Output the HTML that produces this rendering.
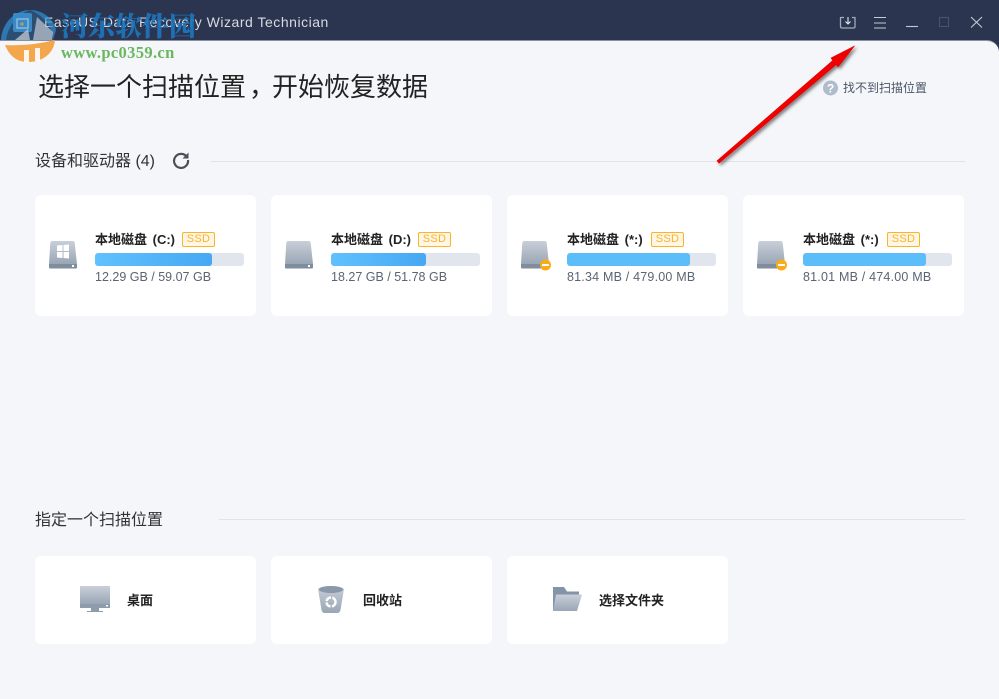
<!DOCTYPE html>
<html><head><meta charset="utf-8">
<style>
html,body{margin:0;padding:0}
body{width:999px;height:699px;position:relative;overflow:hidden;background:#2b354f;font-family:"Liberation Sans","Noto Sans CJK SC",sans-serif;color:#2a2a2a}
.main{position:absolute;left:0;top:40px;width:999px;height:659px;background:#f4f6fa;border-radius:0 12px 0 0;border-top:1px solid #8a90a0;box-sizing:border-box}
.abs{position:absolute;white-space:nowrap}
.card{position:absolute;background:#fff;border-radius:6px;width:221px}
.line{position:absolute;height:1px;background:#e0e3e9}
.bar{position:absolute;left:60px;top:58px;width:149px;height:13px;background:#e1e6ee;border-radius:3px;overflow:hidden}
.fill{height:13px;background:linear-gradient(90deg,#60c1fd,#46a8f3);border-radius:3px}
.name{position:absolute;left:60px;top:37px;font-size:13px;font-weight:bold;color:#222;white-space:nowrap;line-height:16px;word-spacing:2px}
.ssd{position:absolute;top:37px;width:31px;height:13px;border:1px solid #fbb328;background:#fff6e6;color:#fbb328;border-radius:2px;font-size:11px;letter-spacing:.3px;line-height:13px;text-align:center}
.size{position:absolute;left:60px;top:74px;font-size:12.5px;color:#5b6474;white-space:nowrap;line-height:16px}
.ic{position:absolute}
.loc{position:absolute;font-size:13px;font-weight:bold;color:#222;white-space:nowrap;line-height:16px;top:37px}
</style></head><body>
<div class="main"></div>

<svg class="abs" style="left:13px;top:13px" width="20" height="20"><rect x="0" y="0" width="19" height="19" rx="2" fill="#3f87bf"/><rect x="4" y="6" width="11" height="9" fill="none" stroke="#a9cbe3" stroke-width="1.500"/><path d="M9 9v4M7 11h4" stroke="#e0a040" stroke-width="1.500"/></svg>
<div class="abs" style="left:44px;top:14px;font-size:14px;line-height:17px;letter-spacing:.52px;color:#d8dbe2">EaseUS Data Recovery Wizard Technician</div>

<svg class="abs" style="left:0;top:0" width="60" height="64" viewBox="0 0 60 64">
<path d="M1 40C1 24 14 10 30 10c13 0 24 9 26 20l-3 10H1z" fill="#2f8fd0" opacity=".28"/>
<path d="M1 40C2 24 14 10 30 10c-12 4-22 16-24 30z" fill="#2f8fd0" opacity=".65"/>
<path d="M30 10c13 0 24 9 26 20l-3 10c0-12-8-24-23-30z" fill="#2f8fd0" opacity=".6"/>
<path d="M37 17 53 32l-1 8H33z" fill="#cfd3da" opacity=".65"/>
<path d="M15 40 28 29l2 11z" fill="#cfd3da" opacity=".7"/>
<path d="M5 45c16 1 34-1 50-5-1 13-12 22-27 22C16 62 9 55 5 45z" fill="#f3a64b"/>
<rect x="24" y="50" width="5" height="12" fill="#fff" opacity=".9"/><rect x="35" y="48" width="5" height="13" fill="#fff" opacity=".9"/>
</svg>
<div class="abs" style="left:61px;top:9px;font-family:'Noto Serif CJK SC',serif;font-weight:900;font-size:27px;line-height:32px;color:#1d74bc;opacity:.92">河东软件园</div>
<div class="abs" style="left:61px;top:44px;font-family:'Liberation Serif',serif;font-weight:bold;font-size:16.500px;line-height:18px;color:#6ab760;letter-spacing:.35px">www.pc0359.cn</div>

<!-- window icons -->
<svg class="abs" style="left:830px;top:5px" width="169" height="35" fill="none" stroke="#c6cbd6" stroke-width="1.100">
<path d="M10.500 12v9.500c0 1 .5 1.500 1.500 1.500h11.500c1 0 1.500-.5 1.500-1.500V12M10.500 12.500h3.500M22 12.500h3" stroke="#a4aab8" stroke-width="1.300"/>
<path d="M18 12v7M15.500 16.500l2.500 2.500 2.500-2.500" stroke="#e4e7ee"/>
<path d="M44 12.500h12M44 18h12M44 23h12"/>
<path d="M76 21.500h12"/>
<rect x="109.500" y="12.500" width="9" height="9" stroke="#48536b"/>
<path d="M141 12l11 10.500M152 12l-11 10.500"/>
</svg>

<div class="abs" style="left:38px;top:71px;font-size:26px;line-height:32px;color:#222">选择一个扫描位置<span style="position:relative;left:3px">，</span>开始恢复数据</div>
<svg class="abs" style="left:823px;top:80px" width="16" height="16"><circle cx="7.500" cy="8" r="7.500" fill="#b0bccb"/><text x="7.500" y="12.500" font-size="12" font-weight="bold" fill="#fff" text-anchor="middle" font-family="Liberation Sans">?</text></svg>
<div class="abs" style="left:843px;top:80px;font-size:12px;line-height:16px;color:#4c5566">找不到扫描位置</div>

<div class="abs" style="left:35px;top:152px;font-size:16px;line-height:20px;color:#333">设备和驱动器 (4)</div>
<svg class="abs" style="left:172px;top:151px" width="18" height="18" fill="none"><path d="M15 6.200A7 7 0 1 0 16 9" stroke="#4a4f58" stroke-width="2.200"/><path d="M16.500 1.500v6h-6z" fill="#4a4f58"/></svg>
<div class="line" style="left:211px;top:161px;width:754px"></div>

<div class="card" style="left:35px;top:195px;height:121px">
<svg class="ic" style="left:14px;top:45px" width="30" height="30"><defs><linearGradient id="g" x1="0" y1="0" x2="0" y2="1"><stop offset="0" stop-color="#c8cfd9"/><stop offset="1" stop-color="#9aa6b5"/></linearGradient></defs><path d="M3.500 1h20q2 0 2.200 2L28 24H0L1.300 3q.2-2 2.200-2z" fill="url(#g)"/><path d="M0 24h28v3.500q0 1-1 1H1q-1 0-1-1z" fill="#7f8d9d"/><rect x="23" y="25" width="2" height="2" fill="#fff"/><path d="M8 5.500l5.500-.5v6H8zM14.500 5l5.500-.5V11h-5.500zM8 12h5.500v6L8 17.500zM14.500 12H20v6.500l-5.500-.5z" fill="#fff"/></svg>
<div class="name">本地磁盘 (C:)</div><div class="ssd" style="left:147px">SSD</div>
<div class="bar"><div class="fill" style="width:117px"></div></div>
<div class="size">12.29 GB / 59.07 GB</div>
</div>

<div class="card" style="left:271px;top:195px;height:121px">
<svg class="ic" style="left:14px;top:45px" width="30" height="30"><path d="M3.500 1h20q2 0 2.200 2L28 24H0L1.300 3q.2-2 2.200-2z" fill="url(#g)"/><path d="M0 24h28v3.500q0 1-1 1H1q-1 0-1-1z" fill="#7f8d9d"/><rect x="23" y="25" width="2" height="2" fill="#fff"/></svg>
<div class="name">本地磁盘 (D:)</div><div class="ssd" style="left:147px">SSD</div>
<div class="bar"><div class="fill" style="width:95px"></div></div>
<div class="size">18.27 GB / 51.78 GB</div>
</div>

<div class="card" style="left:507px;top:195px;height:121px">
<svg class="ic" style="left:14px;top:45px" width="32" height="32"><path d="M3.500 1h20q2 0 2.200 2L28 24H0L1.300 3q.2-2 2.200-2z" fill="url(#g)"/><path d="M0 24h28v3.500q0 1-1 1H1q-1 0-1-1z" fill="#7f8d9d"/><circle cx="24.500" cy="25" r="5.500" fill="#fbab18"/><rect x="21" y="24" width="7" height="2" fill="#fff"/></svg>
<div class="name">本地磁盘 (*:)</div><div class="ssd" style="left:144px">SSD</div>
<div class="bar"><div class="fill" style="width:123px;background:#5cbdfb"></div></div>
<div class="size" style="letter-spacing:.2px">81.34 MB / 479.00 MB</div>
</div>

<div class="card" style="left:743px;top:195px;height:121px">
<svg class="ic" style="left:14px;top:45px" width="32" height="32"><path d="M3.500 1h20q2 0 2.200 2L28 24H0L1.300 3q.2-2 2.200-2z" fill="url(#g)"/><path d="M0 24h28v3.500q0 1-1 1H1q-1 0-1-1z" fill="#7f8d9d"/><circle cx="24.500" cy="25" r="5.500" fill="#fbab18"/><rect x="21" y="24" width="7" height="2" fill="#fff"/></svg>
<div class="name">本地磁盘 (*:)</div><div class="ssd" style="left:144px">SSD</div>
<div class="bar"><div class="fill" style="width:123px;background:#5cbdfb"></div></div>
<div class="size" style="letter-spacing:.2px">81.01 MB / 474.00 MB</div>
</div>

<div class="abs" style="left:35px;top:511px;font-size:16px;line-height:20px;color:#333">指定一个扫描位置</div>
<div class="line" style="left:219px;top:519px;width:746px"></div>

<div class="card" style="left:35px;top:556px;height:88px">
<svg class="ic" style="left:45px;top:30px" width="30" height="26"><path d="M0 0h30v18H0z" fill="url(#g)"/><path d="M0 18h30v4H0z" fill="#8d9bab"/><rect x="26" y="19" width="2" height="1.500" fill="#fff"/><rect x="11" y="22" width="8" height="3" fill="#8d9bab"/><rect x="7" y="25" width="16" height="1.200" fill="#8d9bab"/></svg>
<div class="loc" style="left:92px">桌面</div>
</div>

<div class="card" style="left:271px;top:556px;height:88px">
<svg class="ic" style="left:47px;top:29px" width="26" height="28"><path d="M0 4c3-4 22-4 26 0l-3.500 21c-.5 2-2 3-3 3H6.500c-1 0-2.500-1-3-3z" fill="url(#g)"/><ellipse cx="13" cy="4.500" rx="12" ry="3.500" fill="#8a99aa"/><circle cx="13" cy="17" r="4.500" fill="none" stroke="#fff" stroke-width="2.500" stroke-dasharray="6 1.500"/></svg>
<div class="loc" style="left:92px">回收站</div>
</div>

<div class="card" style="left:507px;top:556px;height:88px">
<svg class="ic" style="left:46px;top:30px" width="30" height="26"><path d="M0 1h11l3 4.500h12V10H4L0 25z" fill="#8393a8"/><path d="M0 25 3 8.500H29L24 25z" fill="url(#g)"/></svg>
<div class="loc" style="left:92px">选择文件夹</div>
</div>

<!-- red arrow -->
<svg class="abs" style="left:700px;top:30px" width="170" height="150">
<defs><filter id="s" x="-20%" y="-20%" width="140%" height="140%"><feDropShadow dx="2" dy="2" stdDeviation="1.500" flood-color="#000" flood-opacity=".5"/></filter></defs>
<path d="M17 130.800 L132.800 30.500 L131 28 L154.500 16 L138 37 L136.200 34.500 L19 133.200z" fill="#f00000" stroke="#e00000" stroke-width=".6" stroke-linejoin="round" filter="url(#s)"/>
</svg>
</body></html>
